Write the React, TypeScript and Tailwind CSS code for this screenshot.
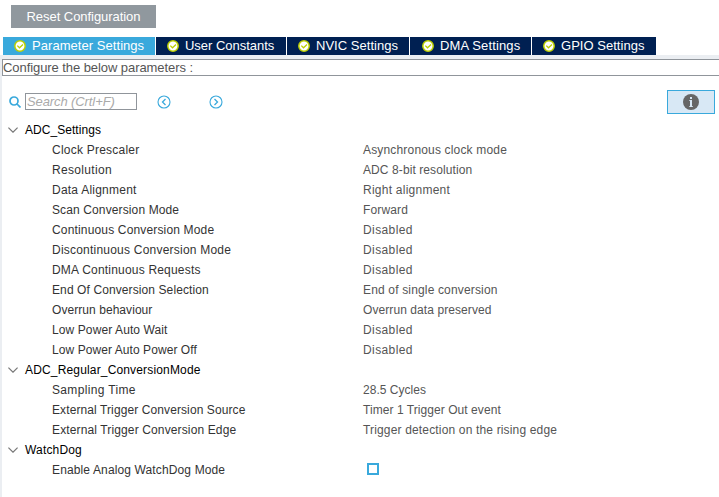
type Row = { label: string; value: string; lt: string; vt: string };

const D = { value: "Disabled", vt: "tracking-[0.4px]" };

const adc: Row[] = [
  { label: "Clock Prescaler", lt: "tracking-[0.23px]", value: "Asynchronous clock mode", vt: "tracking-[0.17px]" },
  { label: "Resolution", lt: "tracking-[0.32px]", value: "ADC 8-bit resolution", vt: "tracking-[0.09px]" },
  { label: "Data Alignment", lt: "tracking-[0.23px]", value: "Right alignment", vt: "tracking-[0.25px]" },
  { label: "Scan Conversion Mode", lt: "tracking-[0.12px]", value: "Forward", vt: "tracking-[0.15px]" },
  { label: "Continuous Conversion Mode", lt: "tracking-[0.16px]", ...D },
  { label: "Discontinuous Conversion Mode", lt: "tracking-[0.22px]", ...D },
  { label: "DMA Continuous Requests", lt: "tracking-[0.2px]", ...D },
  { label: "End Of Conversion Selection", lt: "tracking-[0.1px]", value: "End of single conversion", vt: "tracking-[0.16px]" },
  { label: "Overrun behaviour", lt: "tracking-[0.06px]", value: "Overrun data preserved", vt: "tracking-[0.08px]" },
  { label: "Low Power Auto Wait", lt: "tracking-[0.1px]", ...D },
  { label: "Low Power Auto Power Off", lt: "tracking-[0.07px]", ...D },
];

const regular: Row[] = [
  { label: "Sampling Time", lt: "tracking-[0.34px]", value: "28.5 Cycles", vt: "tracking-[0.03px]" },
  { label: "External Trigger Conversion Source", lt: "tracking-[0.1px]", value: "Timer 1 Trigger Out event", vt: "tracking-[0.06px]" },
  { label: "External Trigger Conversion Edge", lt: "tracking-[0.13px]", value: "Trigger detection on the rising edge", vt: "tracking-[0.16px]" },
];

const tabs = [
  { name: "Parameter Settings", style: "w-[152px] bg-[#39a9dc] pl-[11px]", t: "tracking-[0.05px]" },
  { name: "User Constants", style: "w-[130px] bg-[#002052] pl-[11px]", t: "tracking-[-0.02px]" },
  { name: "NVIC Settings", style: "w-[122px] bg-[#002052] pl-[11px]", t: "tracking-[0.03px]" },
  { name: "DMA Settings", style: "w-[121px] bg-[#002052] pl-[12px]", t: "tracking-[0.13px]" },
  { name: "GPIO Settings", style: "w-[124px] bg-[#002052] pl-[11px]", t: "tracking-[0.03px]" },
];

function Check() {
  return (
    <svg className="size-3 shrink-0" viewBox="0 0 12 12">
      <circle cx="6" cy="6" r="5.2" fill="#fff" stroke="#bccf00" strokeWidth="1.5" />
      <path d="M3.3 5.6 5.5 7.8 9 4.5" fill="none" stroke="#bccf00" strokeWidth="1.3" />
    </svg>
  );
}

function Arrow({ d }: { d: string }) {
  return (
    <svg className="size-[14px] shrink-0" viewBox="0 0 14 14" fill="none" stroke="#39a9dc">
      <circle cx="7" cy="7" r="6" strokeWidth="1.1" />
      <path d={d} strokeWidth="1.3" />
    </svg>
  );
}

function Group({ title, t }: { title: string; t: string }) {
  return (
    <div className="flex h-5 items-center pl-[6px] text-black">
      <svg className="mr-[7px] h-[6px] w-[10px]" viewBox="0 0 10 6" fill="none" stroke="#777" strokeWidth="1.2">
        <path d="M.4.6 5 5.2 9.6.6" />
      </svg>
      <span className={t}>{title}</span>
    </div>
  );
}

function Rows({ rows }: { rows: Row[] }) {
  return rows.map((r) => (
    <div key={r.label} className="flex h-5 items-center pl-[50px]">
      <span className={"w-[311px] text-[#333] " + r.lt}>{r.label}</span>
      <span className={"text-[#555] " + r.vt}>{r.value}</span>
    </div>
  ));
}

export default function App() {
  return (
    <div className="h-[497px] w-[719px] overflow-hidden whitespace-nowrap bg-white font-['Liberation_Sans',Arial,sans-serif] text-[12px] leading-5">
      <div className="h-[37px] pl-[11px] pt-[5px]">
        <button className="block h-[23px] w-[145px] bg-[#90989e] text-[13px] leading-[23px] tracking-[-0.05px] text-white">
          Reset Configuration
        </button>
      </div>
      <div className="flex h-[18px] gap-px pl-[3px]">
        {tabs.map((tab) => (
          <div key={tab.name} className={"flex items-center gap-[6px] text-[13px] leading-[18px] text-white " + tab.style}>
            <Check />
            <span className={tab.t}>{tab.name}</span>
          </div>
        ))}
      </div>
      <div className="h-[442px] bg-[#ebeef2] pl-[2px] pt-[4px]">
        <div className="h-full bg-white">
          <div className="h-[17px] border border-r-0 border-[#90959b] text-[13px] leading-[16px] tracking-[-0.07px] text-[#555]">
            Configure the below parameters :
          </div>
          <div className="flex h-[44px] pl-[7px] pr-1 pt-[14px]">
            <svg className="mr-1 mt-[6px] size-3" viewBox="0 0 12 12" fill="none" stroke="#39a9dc" strokeWidth="1.7">
              <circle cx="5" cy="5" r="4" />
              <path d="m8 8 3.5 3.5" />
            </svg>
            <div className="mt-[3px] h-[17px] w-[112px] border border-[#90959b] pl-[1px] text-[13px] italic leading-[15px] tracking-[-0.1px] text-[#aaa]">
              Search (Crtl+F)
            </div>
            <div className="ml-5 mt-[5px] flex gap-[38px]">
              <Arrow d="M8.5 4 5.5 7l3 3" />
              <Arrow d="m5.5 4 3 3-3 3" />
            </div>
            <div className="ml-auto flex h-6 w-12 items-center justify-center border border-[#39a9dc] bg-[#d8e8f5]">
              <svg className="size-4" viewBox="0 0 16 16">
                <circle cx="8" cy="8" r="8" fill="#666" />
                <path d="M7 3h2v2H7zM6.3 6H9v6h.8v1H6.3v-1H7V7h-.7z" fill="#d8e8f5" />
              </svg>
            </div>
          </div>
          <Group title="ADC_Settings" t="tracking-[0.05px]" />
          <Rows rows={adc} />
          <Group title="ADC_Regular_ConversionMode" t="tracking-[0.16px]" />
          <Rows rows={regular} />
          <Group title="WatchDog" t="tracking-[0.17px]" />
          <div className="flex h-5 items-center pl-[50px]">
            <span className="w-[315px] tracking-[0.13px] text-[#333]">Enable Analog WatchDog Mode</span>
            <span className="mb-[2px] size-3 border-2 border-[#39a9dc]" />
          </div>
        </div>
      </div>
    </div>
  );
}
